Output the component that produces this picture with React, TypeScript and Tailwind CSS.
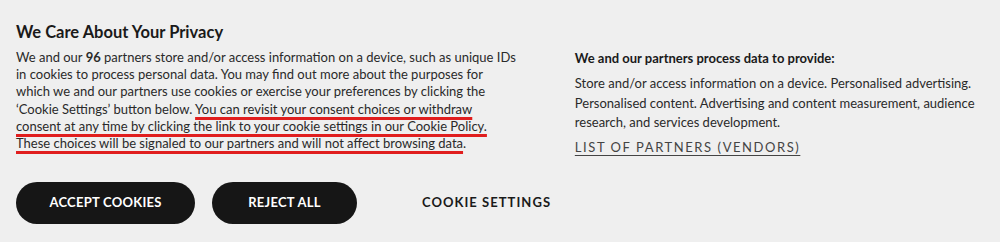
const App = () => {
    return (
        <div className="w-[1000px] h-[242px] bg-[#efefef] text-[#1c1c1c] font-['Lato',sans-serif] flex flex-col px-4 pt-[21px]">
            <div className="flex">
                {/* Left: notice */}
                <div className="w-[500px] whitespace-nowrap">
                    <h2 className="text-[16.5px] leading-[22px] font-bold text-[#1a1a1a]">We Care About Your Privacy</h2>
                    <p className="mt-[6px] text-[13px] leading-[17.2px] text-[#2a2a2a]">
                        We and our <span className="font-bold">96</span> partners store and/or access information on a device, such as unique IDs
                        <br />
                        in cookies to process personal data. You may find out more about the purposes for
                        <br />
                        which we and our partners use cookies or exercise your preferences by clicking the
                        <br />
                        ‘Cookie Settings’ button below.{' '}
                        <span className="underline decoration-[#e01e1e] decoration-[3px] underline-offset-[3px]">
                            You can revisit your consent choices or withdraw
                            <br />
                            consent at any time by clicking the link to your cookie settings in our Cookie Policy.
                            <br />
                            These choices will be signaled to our partners and will not affect browsing data
                        </span>
                        .
                    </p>
                </div>

                {/* Right: purposes */}
                <div className="ml-[59px] w-[410px] pt-[28px]">
                    <h3 className="text-[13px] leading-[18px] font-bold text-[#1a1a1a]">We and our partners process data to provide:</h3>
                    <p className="mt-[7px] text-[13px] leading-[19.5px] text-[#2a2a2a]">
                        Store and/or access information on a device. Personalised advertising. Personalised content. Advertising and content measurement, audience research, and services development.
                    </p>
                    <a href="#" className="block mt-[5px] text-[13px] leading-[18px] tracking-[0.12em] text-[#444] underline underline-offset-[3px]">
                        LIST OF PARTNERS (VENDORS)
                    </a>
                </div>
            </div>

            {/* Buttons */}
            <div className="flex items-center mt-[26px]">
                <button className="w-[179px] h-[42px] rounded-full bg-[#161616] text-white text-[13px] font-bold tracking-[0.02em]">
                    ACCEPT COOKIES
                </button>
                <button className="ml-[17px] w-[145px] h-[42px] rounded-full bg-[#161616] text-white text-[13px] font-bold tracking-[0.02em]">
                    REJECT ALL
                </button>
                <button className="ml-[65px] text-[13px] font-bold tracking-[0.08em] text-[#1a1a1a]">
                    COOKIE SETTINGS
                </button>
            </div>
        </div>
    );
};

export default App;
